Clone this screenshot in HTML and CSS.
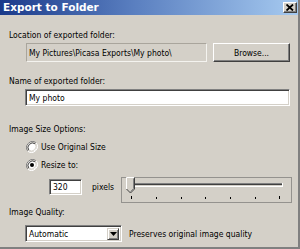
FILE: index.html
```html
<!DOCTYPE html>
<html>
<head>
<meta charset="utf-8">
<link rel="stylesheet" href="styles.css">
</head>
<body>
<div class="window">
  <div class="titlebar">
    <span class="title">Export to Folder</span>
    <span class="close"><svg width="8" height="7" viewBox="0 0 8 7"><path d="M0.5 0.5 L7 6.5 M7 0.5 L0.5 6.5" stroke="#000" stroke-width="1.8"/></svg></span>
  </div>
  <div class="body">
    <div class="label l1">Location of exported folder:</div>
    <div class="row r1">
      <div class="field readonly">My Pictures\Picasa Exports\My photo\</div>
      <div class="button">Browse...</div>
    </div>
    <div class="label l2">Name of exported folder:</div>
    <div class="field name">My photo</div>
    <div class="label l3">Image Size Options:</div>
    <div class="radio rd1">
      <svg class="rbox" width="12" height="12" viewBox="0 0 12 12">
        <path d="M10.2 1.8 A6 6 0 0 0 1.8 10.2" fill="none" stroke="#808080" stroke-width="1"/>
        <path d="M1.8 10.2 A6 6 0 0 0 10.2 1.8" fill="none" stroke="#ffffff" stroke-width="1"/>
        <circle cx="6" cy="6" r="4.6" fill="#fff"/>
        <path d="M9.2 2.8 A4.6 4.6 0 0 0 2.8 9.2" fill="none" stroke="#404040" stroke-width="1"/>
        <path d="M2.8 9.2 A4.6 4.6 0 0 0 9.2 2.8" fill="none" stroke="#d4d0c8" stroke-width="1"/>
      </svg>
      <span>Use Original Size</span>
    </div>
    <div class="radio rd2">
      <svg class="rbox" width="12" height="12" viewBox="0 0 12 12">
        <path d="M10.2 1.8 A6 6 0 0 0 1.8 10.2" fill="none" stroke="#808080" stroke-width="1"/>
        <path d="M1.8 10.2 A6 6 0 0 0 10.2 1.8" fill="none" stroke="#ffffff" stroke-width="1"/>
        <circle cx="6" cy="6" r="4.6" fill="#fff"/>
        <path d="M9.2 2.8 A4.6 4.6 0 0 0 2.8 9.2" fill="none" stroke="#404040" stroke-width="1"/>
        <path d="M2.8 9.2 A4.6 4.6 0 0 0 9.2 2.8" fill="none" stroke="#d4d0c8" stroke-width="1"/>
        <circle cx="6" cy="6" r="2" fill="#000"/>
      </svg>
      <span>Resize to:</span>
    </div>
    <div class="row r3">
      <div class="field size">320</div>
      <span class="pixels">pixels</span>
      <div class="slider">
        <svg width="171" height="26" viewBox="0 0 171 26">
          <rect x="0.5" y="0.5" width="170" height="25" fill="none" stroke="#555" stroke-width="1" stroke-dasharray="1 1"/>
          <rect x="5" y="6" width="157" height="1" fill="#808080"/>
          <rect x="5" y="7" width="157" height="1" fill="#404040"/>
          <rect x="5" y="8" width="157" height="1" fill="#d4d0c8"/>
          <rect x="5" y="9" width="157" height="1" fill="#ffffff"/>
          <rect x="161" y="6" width="1" height="4" fill="#ffffff"/>
          <path d="M5.5 0.5 H13.5 V12 L9.5 16 L5.5 12 Z" fill="#d4d0c8"/>
          <path d="M5.5 12 V0.5 H13.5" fill="none" stroke="#ffffff" stroke-width="1"/>
          <path d="M13.5 0.5 V12 L9.5 16 L5.5 12" fill="none" stroke="#404040" stroke-width="1"/>
          <path d="M12.5 1.5 V11.6 L9.5 14.6" fill="none" stroke="#808080" stroke-width="1"/>
          <g fill="#000">
            <rect x="10" y="19" width="1" height="3"/>
            <rect x="35" y="20" width="1" height="2"/>
            <rect x="60" y="20" width="1" height="2"/>
            <rect x="84" y="20" width="1" height="2"/>
            <rect x="109" y="20" width="1" height="2"/>
            <rect x="134" y="20" width="1" height="2"/>
            <rect x="158" y="19" width="1" height="3"/>
          </g>
        </svg>
      </div>
    </div>
    <div class="label l4">Image Quality:</div>
    <div class="row r4">
      <div class="combo">
        <span class="ctext">Automatic</span>
        <span class="cbtn"><svg width="7" height="4" viewBox="0 0 7 4"><path d="M0 0 H7 L3.5 4 Z" fill="#000"/></svg></span>
      </div>
      <span class="qtext">Preserves original image quality</span>
    </div>
  </div>
</div>
</body>
</html>
```

FILE: styles.css
```css
html, body {
  margin: 0;
  padding: 0;
  background: #d4d0c8;
}
.window {
  width: 300px;
  height: 249px;
  box-sizing: border-box;
  background: #d4d0c8;
  border-right: 2px solid #808080;
  border-bottom: 2px solid #808080;
  font-family: "DejaVu Sans Condensed", "DejaVu Sans", sans-serif;
  font-stretch: condensed;
  font-size: 8.5px;
  color: #000;
  overflow: hidden;
}
.titlebar {
  height: 15px;
  background: linear-gradient(to right, #1a3a8a 0%, #5a7fc0 45%, #a6caf0 100%);
  display: flex;
  align-items: center;
  justify-content: space-between;
  padding: 0 1px 0 3px;
}
.title {
  color: #fff;
  font-family: "DejaVu Sans", sans-serif;
  font-stretch: normal;
  font-weight: bold;
  font-size: 10.5px;
  line-height: 15px;
}
.close {
  width: 12px;
  height: 9px;
  background: #d4d0c8;
  border: 1px solid;
  border-color: #fff #404040 #404040 #fff;
  box-shadow: inset -1px -1px #808080;
  display: flex;
  align-items: center;
  justify-content: center;
}
.body {
  display: flex;
  flex-direction: column;
  padding: 14px 0 0 9px;
}
.label {
  height: 12px;
  line-height: 12px;
}
.row {
  display: flex;
  align-items: center;
}
.field {
  box-sizing: border-box;
  border: 1px solid;
  border-color: #808080 #fff #fff #808080;
  box-shadow: inset 1px 1px #404040, inset -1px -1px #d4d0c8;
  background: #fff;
  padding-left: 3px;
  display: flex;
  align-items: center;
  white-space: nowrap;
  overflow: hidden;
}
.r1 {
  margin-top: 2px;
  height: 19px;
  margin-left: 17px;
}
.readonly {
  width: 181px;
  height: 19px;
  background: #d4d0c8;
  border-color: #a9a59c #f4f3ef #f4f3ef #a9a59c;
  box-shadow: none;
  padding-left: 2px;
}
.button {
  box-sizing: border-box;
  margin-left: 6px;
  width: 77px;
  height: 19px;
  border: 1px solid;
  border-color: #fff #404040 #404040 #fff;
  box-shadow: inset -1px -1px #808080;
  display: flex;
  align-items: center;
  justify-content: center;
}
.l2 { margin-top: 13px; }
.name {
  margin-top: 2px;
  margin-left: 16px;
  width: 265px;
  height: 17px;
}
.l3 { margin-top: 17px; }
.radio {
  display: flex;
  align-items: center;
  height: 14px;
  margin-left: 17px;
}
.rbox { margin-right: 3px; }
.rd1 { margin-top: 5px; }
.rd2 { margin-top: 4px; }
.r3 {
  margin-top: 5px;
  height: 26px;
  align-items: flex-start;
  margin-left: 40px;
}
.size {
  margin-top: 2px;
  width: 33px;
  height: 16px;
}
.pixels {
  margin-left: 10px;
  margin-top: 3px;
  line-height: 14px;
}
.slider {
  margin-left: 7px;
  height: 26px;
}
.slider svg { display: block; }
.l4 { margin-top: 3px; }
.r4 {
  margin-top: 7px;
  margin-left: 16px;
  height: 17px;
}
.combo {
  box-sizing: border-box;
  width: 97px;
  height: 17px;
  border: 1px solid;
  border-color: #808080 #fff #fff #808080;
  box-shadow: inset 1px 1px #404040, inset -1px -1px #d4d0c8;
  background: #fff;
  display: flex;
  align-items: center;
  justify-content: space-between;
  padding: 2px 2px 2px 3px;
}
.cbtn {
  box-sizing: border-box;
  width: 12px;
  height: 12px;
  background: #d4d0c8;
  border: 1px solid;
  border-color: #d4d0c8 #404040 #404040 #d4d0c8;
  box-shadow: inset 1px 1px #fff, inset -1px -1px #808080;
  display: flex;
  align-items: center;
  justify-content: center;
}
.qtext { margin-left: 7px; }
```
